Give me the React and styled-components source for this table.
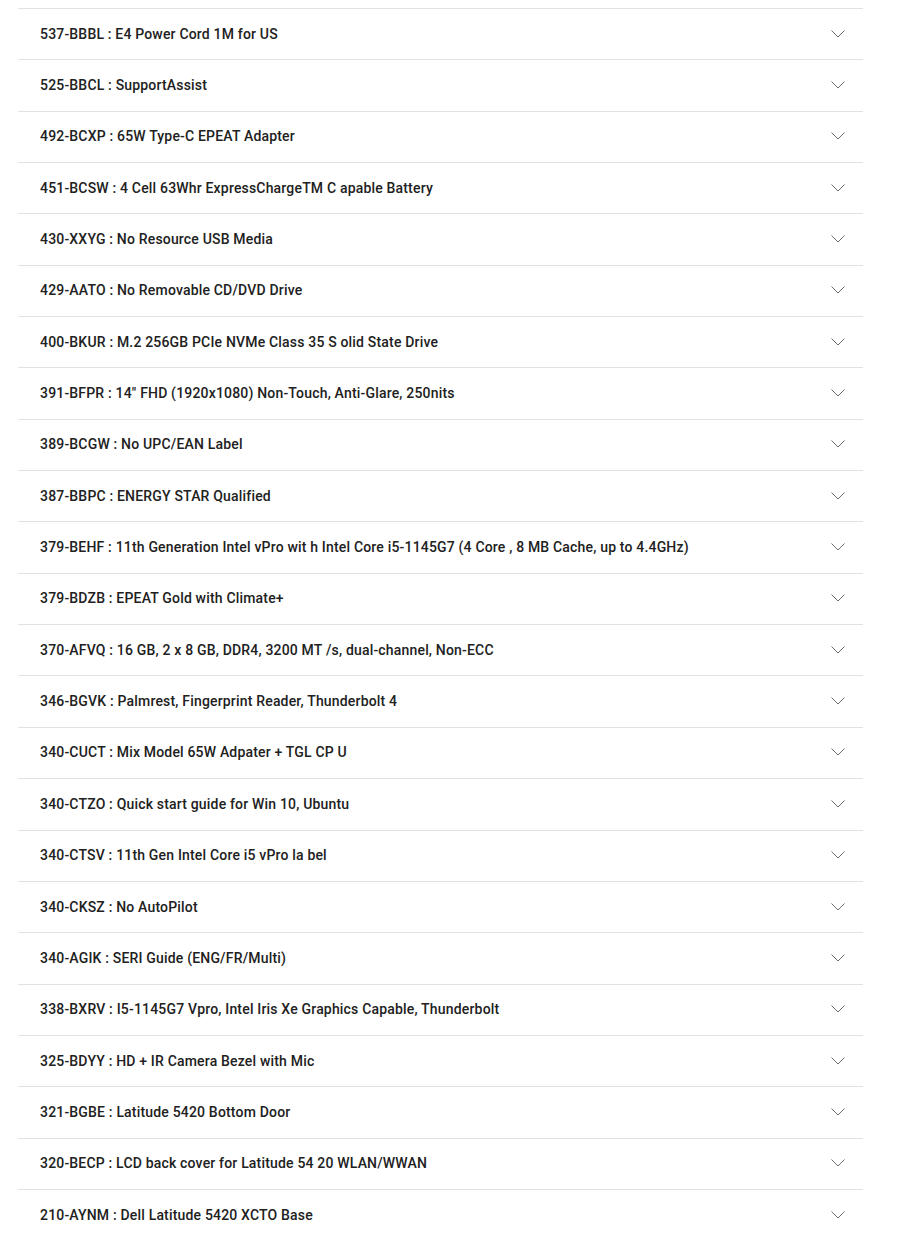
import React from 'react'
import styled, { createGlobalStyle } from 'styled-components'

const items = [
  '537-BBBL : E4 Power Cord 1M for US',
  '525-BBCL : SupportAssist',
  '492-BCXP : 65W Type-C EPEAT Adapter',
  '451-BCSW : 4 Cell 63Whr ExpressChargeTM C apable Battery',
  '430-XXYG : No Resource USB Media',
  '429-AATO : No Removable CD/DVD Drive',
  '400-BKUR : M.2 256GB PCIe NVMe Class 35 S olid State Drive',
  '391-BFPR : 14" FHD (1920x1080) Non-Touch, Anti-Glare, 250nits',
  '389-BCGW : No UPC/EAN Label',
  '387-BBPC : ENERGY STAR Qualified',
  '379-BEHF : 11th Generation Intel vPro wit h Intel Core i5-1145G7 (4 Core , 8 MB Cache, up to 4.4GHz)',
  '379-BDZB : EPEAT Gold with Climate+',
  '370-AFVQ : 16 GB, 2 x 8 GB, DDR4, 3200 MT /s, dual-channel, Non-ECC',
  '346-BGVK : Palmrest, Fingerprint Reader, Thunderbolt 4',
  '340-CUCT : Mix Model 65W Adpater + TGL CP U',
  '340-CTZO : Quick start guide for Win 10, Ubuntu',
  '340-CTSV : 11th Gen Intel Core i5 vPro la bel',
  '340-CKSZ : No AutoPilot',
  '340-AGIK : SERI Guide (ENG/FR/Multi)',
  '338-BXRV : I5-1145G7 Vpro, Intel Iris Xe Graphics Capable, Thunderbolt',
  '325-BDYY : HD + IR Camera Bezel with Mic',
  '321-BGBE : Latitude 5420 Bottom Door',
  '320-BECP : LCD back cover for Latitude 54 20 WLAN/WWAN',
  '210-AYNM : Dell Latitude 5420 XCTO Base',
]

const GlobalStyle = createGlobalStyle`
  body {
    margin: 0;
    background: #fff;
    font-family: Roboto, 'Liberation Sans', sans-serif;
  }
`

const Page = styled.div`
  padding: 8px 0 0 18px;
`

const List = styled.ul`
  list-style: none;
  margin: 0;
  padding: 0;
  width: 845px;
`

const Row = styled.li`
  box-sizing: border-box;
  height: 51.35px;
  border-top: 1px solid #e2e2e2;
  padding: 0 18px 1px 22px;
  display: flex;
  align-items: center;
  justify-content: space-between;
  cursor: pointer;
`

const Label = styled.span`
  font-size: 14px;
  font-weight: 500;
  color: #212121;
  letter-spacing: 0.18px;
`

const Chevron = () => (
  <svg width='14' height='8' viewBox='0 0 14 8' fill='none'>
    <polyline points='0.5,0.5 7,7 13.5,0.5' stroke='#6b6b6b' strokeWidth='1' />
  </svg>
)

const App = () => {
  return (
    <Page>
      <GlobalStyle />
      <List>
        {items.map((item) => (
          <Row key={item}>
            <Label>{item}</Label>
            <Chevron />
          </Row>
        ))}
      </List>
    </Page>
  )
}

export default App
